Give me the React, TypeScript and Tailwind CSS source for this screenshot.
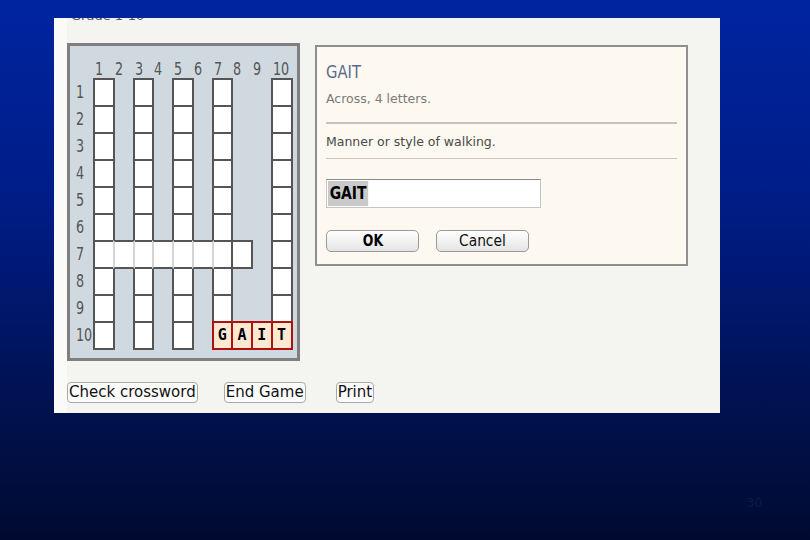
import React from "react";

type Cell = "none" | "white" | "faint" | string;

const cellAt = (r: number, c: number): Cell => {
  if (r === 10 && c >= 7) return "GAIT"[c - 7];
  if (r === 7 && (c === 2 || c === 4 || c === 6)) return "faint";
  if (c === 1 || c === 3 || c === 5) return "white";
  if ((c === 7 || c === 10) && r <= 9) return "white";
  if (r === 7 && c <= 8) return "white";
  return "none";
};

const Label = ({ n }: { n: number }) => (
  <span className="inline-block origin-left scale-x-75 text-[17px] leading-none text-[#555]">
    {n}
  </span>
);

const Grid = () => {
  const rows = Array.from({ length: 10 }, (_, i) => i + 1);
  return (
    <div className="w-[233px] h-[318px] border-[3px] border-[#7f7f7f] bg-[#d0d9e0]">
      <div className="grid grid-cols-[24px_repeat(10,19.75px)] grid-rows-[33px_repeat(10,27px)]">
        <div />
        {rows.map((c) => (
          <div key={`h${c}`} className="flex items-end pb-[1px] pl-[1px]">
            <Label n={c} />
          </div>
        ))}
        {rows.map((r) => (
          <React.Fragment key={`r${r}`}>
            <div className="flex items-center pl-[6px]">
              <Label n={r} />
            </div>
            {rows.map((c) => {
              const v = cellAt(r, c);
              if (v === "none") return <div key={c} />;
              if (v === "white")
                return <div key={c} className="relative -m-px border-2 border-[#555] bg-white" />;
              if (v === "faint")
                return (
                  <div
                    key={c}
                    className="relative z-[5] -m-px border-2 border-[#555] border-x-[#d4d4d4] bg-white"
                  />
                );
              return (
                <div
                  key={c}
                  className="relative z-10 -m-px flex items-center justify-center border-2 border-[#b01010] bg-[#fde8d2] font-['DejaVu_Sans_Mono',monospace] text-[15px] font-bold text-black"
                >
                  {v}
                </div>
              );
            })}
          </React.Fragment>
        ))}
      </div>
    </div>
  );
};

const Dialog = () => (
  <div className="mt-[2px] w-[373px] h-[221px] border-2 border-[#8f8f8f] bg-[#fdf9f0] px-[9px] pt-[16px]">
    <div className="leading-none">
      <span className="inline-block origin-left scale-x-[0.82] text-[18px] leading-none text-[#5a6a8c]">
        GAIT
      </span>
    </div>
    <div className="mt-[12px] text-[12.5px] leading-none text-[#7a7a7a]">Across, 4 letters.</div>
    <div className="mt-[16px] h-[2px] bg-[#c6c2ba]" />
    <div className="mt-[12px] text-[12.5px] leading-none text-[#4a4a4a]">
      Manner or style of walking.
    </div>
    <div className="mt-[10px] h-px bg-[#cbc7bf]" />
    <div className="mt-[20px] flex h-[29px] w-[215px] items-center border border-[#c4c4c4] border-t-[#8a8a8a] bg-white pl-[1px]">
      <span className="inline-block h-[25px] origin-left scale-x-[0.82] bg-[#c9c9c9] px-[2px] text-[17px] font-bold leading-[25px] text-black">
        GAIT
      </span>
    </div>
    <div className="mt-[22px] flex gap-[17px]">
      <button className="flex h-[22px] w-[93px] items-center justify-center rounded-[5px] border border-[#9a9a9a] bg-[linear-gradient(to_bottom,#ffffff,#e4e4e4)]">
        <span className="inline-block scale-x-[0.78] text-[16px] font-bold leading-none text-black">OK</span>
      </button>
      <button className="flex h-[22px] w-[93px] items-center justify-center rounded-[5px] border border-[#9a9a9a] bg-[linear-gradient(to_bottom,#ffffff,#e4e4e4)]">
        <span className="inline-block scale-x-[0.92] text-[15px] leading-none text-[#111]">Cancel</span>
      </button>
    </div>
  </div>
);

const PlainButton = ({ children, className = "" }: { children: React.ReactNode; className?: string }) => (
  <button
    className={`flex h-[21px] items-center rounded-[4px] border border-[#a9a9a9] bg-[#fcfcfc] px-[1px] text-[15px] leading-none text-[#111] ${className}`}
  >
    {children}
  </button>
);

export default function App() {
  return (
    <div className="flex h-[540px] w-[810px] flex-col overflow-hidden bg-[linear-gradient(to_bottom,#0024a0_0%,#001c84_40%,#00114f_75%,#000a30_100%)] font-['DejaVu_Sans',sans-serif]">
      <div className="ml-[54px] mt-[18px] flex h-[395px] w-[666px] bg-[#f4f4f0]">
        <div className="w-[13px] bg-[#fafaf9]" />
        <div className="flex flex-1 flex-col">
          <div className="h-[4px] overflow-hidden pl-[4px]">
            <div className="-mt-[9px] text-[13px] leading-[13px] text-[#555]">Grade 1-10</div>
          </div>
          <div className="mt-[21px] flex items-start gap-[15px]">
            <Grid />
            <Dialog />
          </div>
          <div className="mt-[21px] flex items-start">
            <PlainButton>Check crossword</PlainButton>
            <PlainButton className="ml-[26px]">End Game</PlainButton>
            <PlainButton className="ml-[30px]">Print</PlainButton>
          </div>
        </div>
      </div>
      <div className="mt-[84px] flex justify-end pr-[48px] text-[12px] leading-none text-[#111a48]">30</div>
    </div>
  );
}
